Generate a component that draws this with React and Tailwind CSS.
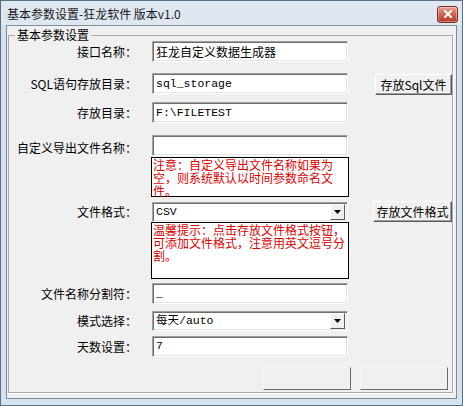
import React from "react";

const FONT = { fontFamily: '"Noto Sans CJK SC", "Liberation Sans", sans-serif' };
const MONO = { fontFamily: '"Liberation Mono", "Noto Sans CJK SC", monospace' };

const editCls =
  "bg-white border border-t-[#a0a0a0] border-l-[#a0a0a0] border-r-white border-b-white shadow-[inset_1px_1px_0_#6f6f6f,inset_-1px_-1px_0_#e3e3e3] flex items-center pl-[3px] text-[12px] text-black leading-none overflow-hidden";

const btnCls =
  "bg-[#f0f0f0] border border-t-white border-l-white border-r-[#5a5a5a] border-b-[#5a5a5a] shadow-[inset_-1px_-1px_0_#a0a0a0] flex items-center justify-center text-[12px] text-black leading-none";

function Label({ children }) {
  return (
    <div className="w-[128px] shrink-0 text-right text-[12px] leading-none text-black whitespace-nowrap">
      {children}
    </div>
  );
}

function Edit({ value, h = "h-[21px]" }) {
  return (
    <div className={`${editCls} ${h} w-[196px] ml-[15px] shrink-0`} style={MONO}>
      <span className="text-[11.5px]">{value}</span>
    </div>
  );
}

function Combo({ value }) {
  return (
    <div className={`${editCls} h-[20px] w-[196px] ml-[15px] shrink-0 justify-between pr-[2px]`} style={MONO}>
      <span className="text-[11.5px]">{value}</span>
      <div className="w-[15px] h-[16px] bg-[#f0f0f0] border border-t-white border-l-white border-r-[#5a5a5a] border-b-[#5a5a5a] flex items-center justify-center">
        <svg width="7" height="4" viewBox="0 0 7 4">
          <path d="M0 0 H7 L3.5 4 Z" fill="#000" />
        </svg>
      </div>
    </div>
  );
}

function Note({ lines, h }) {
  return (
    <div
      className={`${h} w-[198px] ml-[142px] bg-white border border-black pl-[1px] text-[12px] leading-[13px] text-[#e00000]`}
      style={FONT}
    >
      {lines.map((l, i) => (
        <div key={i} className="whitespace-nowrap h-[13px]">{l}</div>
      ))}
    </div>
  );
}

export default function App() {
  return (
    <div
      className="w-[463px] h-[406px] bg-[#d6e2ef] border border-[#5d6f85] flex flex-col"
      style={FONT}
    >
      {/* Title bar */}
      <div className="h-[24px] shrink-0 flex items-center justify-between pl-[6px] pr-[4px] bg-[#dfe7f1]">
        <span className="text-[12px] leading-none text-[#1a1a1a] mt-[2px]">
          基本参数设置-狂龙软件 版本v1.0
        </span>
        <div className="w-[21px] h-[17px] mt-[2px] rounded-[3px] border border-[#7b2e24] bg-gradient-to-b from-[#e8a595] via-[#d0604e] to-[#b53a2a] flex items-center justify-center shadow-[inset_0_0_0_1px_rgba(255,255,255,0.35)]">
          <svg width="8" height="8" viewBox="0 0 8 8">
            <path d="M1 1 L7 7 M7 1 L1 7" stroke="#fff" strokeWidth="2" strokeLinecap="square" />
          </svg>
        </div>
      </div>

      {/* Client area */}
      <div className="mx-[5px] mb-[6px] flex-1 bg-[#f0f0f0] border border-[#7f8c9c] pt-[9px] pl-[1px] pr-[3px] pb-[5px] flex">
        <div className="relative flex-1 border border-[#a9a9a9] shadow-[1px_1px_0_#fff] flex flex-col pl-0">
          <div className="absolute -top-[8px] left-[6px] bg-[#f0f0f0] px-[2px] text-[12px] leading-[14px] text-black">
            基本参数设置
          </div>

          {/* Row 1 */}
          <div className="flex items-center mt-[5px]">
            <Label>接口名称：</Label>
            <div className={`${editCls} h-[21px] w-[196px] ml-[15px]`} style={FONT}>
              <span className="text-[12px]">狂龙自定义数据生成器</span>
            </div>
          </div>

          {/* Row 2 */}
          <div className="flex items-center mt-[10px]">
            <Label>SQL语句存放目录：</Label>
            <Edit value="sql_storage" />
            <div className={`${btnCls} ml-[27px] w-[77px] h-[21px] mt-[2px]`}>存放Sql文件</div>
          </div>

          {/* Row 3 */}
          <div className="flex items-center mt-[7px]">
            <Label>存放目录：</Label>
            <Edit value="F:\FILETEST" />
          </div>

          {/* Row 4 */}
          <div className="flex items-center mt-[12px]">
            <div className="mt-[5px] flex">
              <Label>自定义导出文件名称：</Label>
            </div>
            <Edit value="" />
          </div>

          <div className="mt-[1px]">
            <Note
              h="h-[40px]"
              lines={["注意：自定义导出文件名称如果为", "空，则系统默认以时间参数命名文", "件。"]}
            />
          </div>

          {/* File format */}
          <div className="flex items-center mt-[4px]">
            <Label>文件格式：</Label>
            <Combo value="CSV" />
            <div className={`${btnCls} ml-[25px] w-[79px] h-[21px]`}>存放文件格式</div>
          </div>

          <div>
            <Note
              h="h-[57px]"
              lines={["温馨提示：点击存放文件格式按钮，", "可添加文件格式，注意用英文逗号分", "割。"]}
            />
          </div>

          {/* Separator */}
          <div className="flex items-center mt-[4px]">
            <Label>文件名称分割符：</Label>
            <Edit value="_" />
          </div>

          {/* Mode */}
          <div className="flex items-center mt-[7px]">
            <Label>模式选择：</Label>
            <Combo value="每天/auto" />
          </div>

          {/* Days */}
          <div className="flex items-center mt-[5px]">
            <Label>天数设置：</Label>
            <div className={`${editCls} h-[21px] w-[196px] ml-[15px] items-start pt-[3px]`} style={MONO}>
              <span className="text-[11.5px]">7</span>
            </div>
          </div>

          {/* Bottom buttons */}
          <div className="flex justify-end gap-[9px] mt-[10px] mr-[4px]">
            <div className="w-[88px] h-[23px] bg-[#f0f0f0] border border-t-[#f6f6f6] border-l-[#f6f6f6] border-r-[#6a6a6a] border-b-[#6a6a6a]" />
            <div className="w-[88px] h-[23px] bg-[#f0f0f0] border border-t-[#f6f6f6] border-l-[#f6f6f6] border-r-[#6a6a6a] border-b-[#6a6a6a]" />
          </div>
        </div>
      </div>
    </div>
  );
}
